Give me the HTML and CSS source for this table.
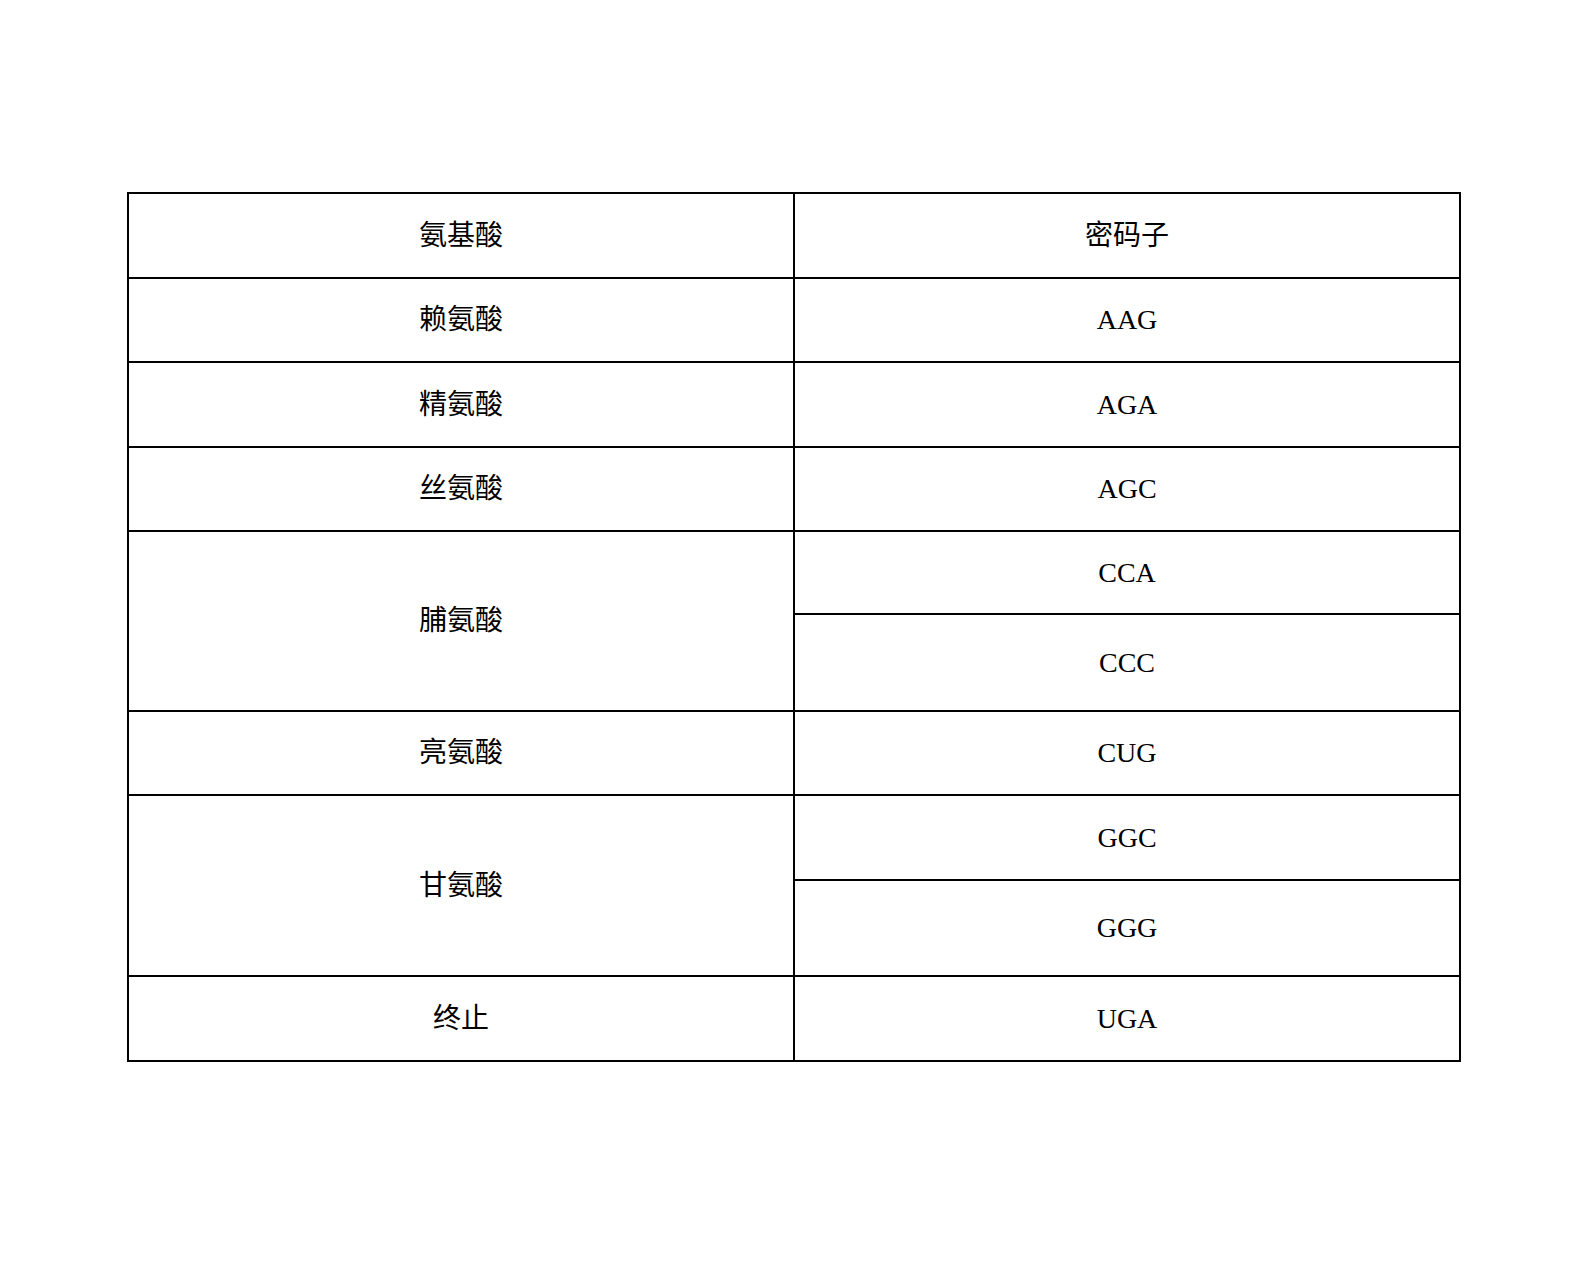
FILE: index.html
```html
<!DOCTYPE html>
<html lang="zh-CN">
<head>
<meta charset="utf-8">
<title>氨基酸与密码子</title>
<link rel="stylesheet" href="styles.css">
</head>
<body>
<div class="page">
  <table class="codon-table">
    <colgroup><col class="col-a"><col class="col-b"></colgroup>
    <tr class="h85"><td>氨基酸</td><td>密码子</td></tr>
    <tr class="h84"><td>赖氨酸</td><td>AAG</td></tr>
    <tr class="h85"><td>精氨酸</td><td>AGA</td></tr>
    <tr class="h84"><td>丝氨酸</td><td>AGC</td></tr>
    <tr class="h83"><td rowspan="2">脯氨酸</td><td>CCA</td></tr>
    <tr class="h97"><td>CCC</td></tr>
    <tr class="h84"><td>亮氨酸</td><td>CUG</td></tr>
    <tr class="h85"><td rowspan="2">甘氨酸</td><td>GGC</td></tr>
    <tr class="h96"><td>GGG</td></tr>
    <tr class="h85"><td>终止</td><td>UGA</td></tr>
  </table>
</div>
</body>
</html>
```

FILE: styles.css
```css
html, body {
  margin: 0;
  padding: 0;
  background: #ffffff;
}

.page {
  padding: 192px 0 0 127px;
}

.codon-table {
  border-collapse: collapse;
  table-layout: fixed;
  width: 1332px;
  font-family: "Liberation Serif", "Noto Sans CJK SC", serif;
  font-size: 28px;
  color: #000000;
}

.col-a { width: 666px; }
.col-b { width: 666px; }

.codon-table td {
  border: 2px solid #000000;
  text-align: center;
  vertical-align: middle;
  padding: 0;
  line-height: 1.2;
}

.h83 { height: 83px; }
.h84 { height: 84px; }
.h85 { height: 85px; }
.h96 { height: 96px; }
.h97 { height: 97px; }
```
